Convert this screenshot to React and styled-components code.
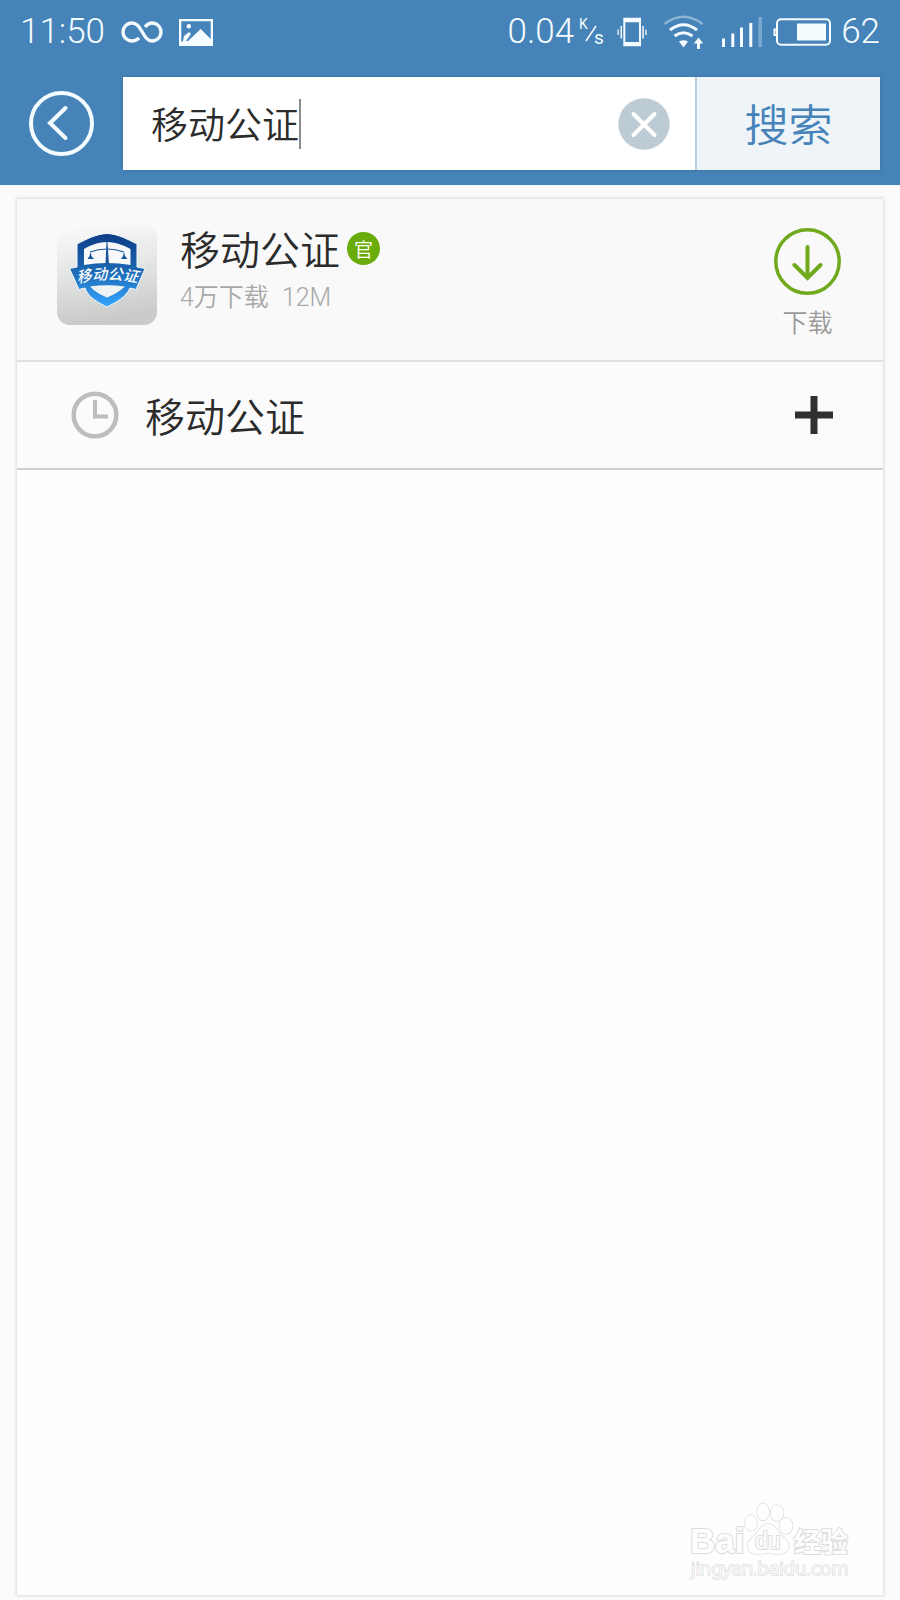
import React, { useState } from "react";
import styled, { createGlobalStyle } from "styled-components";

const cjk = '"Noto Sans CJK SC", sans-serif';

const GlobalStyle = createGlobalStyle`
  *, *::before, *::after { box-sizing: border-box; }
  body {
    margin: 0;
    background: #fbfbfa;
    font-family: Roboto, ${cjk};
    font-weight: 300;
    color: #2b2b2b;
  }
  button, input { font: inherit; color: inherit; border: 0; padding: 0; margin: 0; background: none; }
  button { cursor: pointer; }
  svg { display: block; flex: none; }
`;

const Screen = styled.div`
  display: flex;
  flex-direction: column;
  min-height: 100vh;
`;

const Header = styled.header`
  background: #4683b8;
  color: #f4fcff;
  padding: 0 20px 15px;
`;

const StatusBar = styled.div`
  display: flex;
  align-items: center;
  justify-content: space-between;
  height: 64px;
  margin-bottom: 13px;
  font-size: 35px;
  line-height: 40px;
`;

const StatusGroup = styled.div`
  display: flex;
  align-items: center;
  gap: ${(p) => p.$gap}px;
`;

const Speed = styled.div`
  display: flex;
  align-items: center;
  gap: 5px;
`;

const SearchRow = styled.form`
  display: flex;
  align-items: center;
  gap: 29px;
  padding-left: 9px;
`;

const BackButton = styled.button`
  width: 65px;
  height: 65px;
`;

const SearchBox = styled.div`
  flex: 1;
  display: flex;
  height: 93px;
  background: #fff;
  box-shadow: 0 0 4px #3b719f;
`;

const Field = styled.label`
  flex: 1;
  display: flex;
  align-items: center;
  min-width: 0;
  padding: 0 25px 0 28px;
  color: #2b2b2b;
`;

const SearchInput = styled.input`
  field-sizing: content;
  min-width: 0;
  height: 60px;
  padding-bottom: 2px;
  font-family: ${cjk};
  font-size: 37px;
  font-weight: 350;
  outline: 0;
  caret-color: transparent;
`;

const Caret = styled.span`
  width: 2px;
  height: 50px;
  margin-right: auto;
  background: #8c8c8c;
`;

const ClearButton = styled.button`
  width: 52px;
  height: 52px;
  flex: none;
`;

const SearchButton = styled.button`
  width: 185px;
  padding-bottom: 2px;
  border-left: 2px solid #b9cfdc;
  background: #eff4f8;
  color: #4683b8;
  font-family: ${cjk};
  font-size: 44px;
  font-weight: 350;
  line-height: 60px;
`;

const Card = styled.main`
  position: relative;
  flex: 1;
  margin: 14px 17px 5px;
  background: #fefefe;
  box-shadow: 0 0 3px 1px #d9d9d4;
`;

const AppRow = styled.section`
  display: flex;
  height: 163px;
  padding: 26px 42px 0 40px;
  background: #f9f9f9;
  border-bottom: 2px solid #e0e0e0;
`;

const AppInfo = styled.div`
  flex: 1;
  padding-left: 23px;
`;

const AppTitle = styled.h1`
  display: flex;
  align-items: center;
  gap: 7px;
  height: 46px;
  margin: 0;
  font-family: ${cjk};
  font-size: 40px;
  font-weight: 350;
  line-height: 46px;
`;

const Official = styled.span`
  width: 33px;
  height: 33px;
  border-radius: 50%;
  background: #69ac09;
  color: #fff;
  font-size: 19px;
  line-height: 33px;
  text-align: center;
`;

const Meta = styled.p`
  display: flex;
  gap: 13px;
  margin: 9px 0 0;
  color: #a8a8a8;
  font-size: 25px;
  font-weight: 350;
  line-height: 36px;
`;

const DownloadButton = styled.button`
  display: flex;
  flex-direction: column;
  align-items: center;
  align-self: flex-start;
  gap: 8px;
  margin-top: 3px;
  color: #999;
  font-family: ${cjk};
  font-size: 25px;
  font-weight: 350;
  line-height: 36px;
`;

const HistoryRow = styled.section`
  display: flex;
  align-items: center;
  height: 108px;
  padding: 0 50px 0 54px;
  background: #fbfbfb;
  border-bottom: 2px solid #d0d0d0;
`;

const HistoryLink = styled.a`
  flex: 1;
  display: flex;
  align-items: center;
  gap: 26px;
  color: inherit;
  font-family: ${cjk};
  font-size: 40px;
  font-weight: 350;
  line-height: 48px;
  text-decoration: none;
`;

const PlusButton = styled.button`
  width: 38px;
  height: 38px;
`;

const Watermark = styled.div`
  position: absolute;
  right: 28px;
  bottom: 10px;
`;

const InfinityIcon = () => (
  <svg width="42" height="24" viewBox="0 0 42 24" fill="none" stroke="currentColor" strokeWidth="3.300">
    <path d="M18 18C16 20 13.500 21 11 21A9 9 0 0 1 11 3C16 3 18 7 21 11.500C24 16.500 26 21 31 21A9 9 0 0 0 31 3C28.500 3 26 4.500 24 7" />
  </svg>
);

const PictureIcon = () => (
  <svg width="34" height="27" viewBox="0 0 34 27" fill="currentColor">
    <path d="M0 0H34V27H0ZM2.300 2.300V23L4 22L5 17L10 13L12 15L7 22L9 22L21.700 10L31.700 20V2.300Z" fillRule="evenodd" />
    <circle cx="9.800" cy="7.300" r="2.200" />
  </svg>
);

const SpeedUnit = () => (
  <svg width="28" height="34" viewBox="0 0 28 34" fill="currentColor" fontFamily="Roboto, sans-serif" fontWeight="400">
    <text x="0" y="14" fontSize="14">K</text>
    <path d="M7 26L17 11" stroke="currentColor" strokeWidth="1.500" />
    <text x="15" y="29" fontSize="19">s</text>
  </svg>
);

const VibrateIcon = () => (
  <svg width="36" height="30" viewBox="0 0 36 30" fill="currentColor">
    <path d="M6.300 .7H24V29.300H6.300ZM8.300 5.300V25H22V5.300Z" fillRule="evenodd" />
    <path d="M.5 12.500H1.800V18H.5ZM3.500 9H5V21.500H3.500ZM25.300 9H26.800V21.500H25.300ZM28.300 12.500H29.600V18H28.300Z" />
  </svg>
);

const WifiIcon = () => (
  <svg width="48" height="34" viewBox="0 0 48 34" fill="none" stroke="currentColor">
    <path d="M1.500 9Q20.500 -5.500 39.500 9" strokeWidth="2.500" opacity=".4" />
    <path d="M7 15Q20.500 4.500 34 15" strokeWidth="3" />
    <path d="M11.500 21Q20.500 14.500 29.500 21" strokeWidth="3" />
    <path d="M16 26.500Q20.500 24 25 26.500L20.500 32.500Z" fill="currentColor" stroke="none" />
    <path d="M35.500 22.500L40.200 28.500H37V34H34V28.500H30.800Z" fill="currentColor" stroke="none" />
  </svg>
);

const SignalIcon = () => (
  <svg width="42" height="32" viewBox="0 0 42 32" fill="currentColor">
    <path d="M1 22.500H4V31H1ZM10.300 17.500H13.300V31H10.300ZM19 11.500H22V31H19ZM28.300 7H31.300V31H28.300Z" />
    <path d="M37.300 1H41V31H37.300Z" opacity=".3" />
  </svg>
);

const BatteryIcon = () => (
  <svg width="58" height="30" viewBox="0 0 58 30" fill="none" stroke="currentColor" strokeWidth="2">
    <rect x="4" y="2.300" width="53" height="25.500" rx="4" />
    <path d="M3 12.500H1.500V18H3" />
    <rect x="24" y="6.500" width="29" height="17" fill="currentColor" stroke="none" />
  </svg>
);

const BackIcon = () => (
  <svg width="65" height="65" viewBox="0 0 65 65" fill="none" stroke="#f4fcff" strokeWidth="4">
    <circle cx="32.500" cy="32.500" r="30.500" />
    <path d="M36.500 17L21 32L36.500 47" strokeLinecap="round" />
  </svg>
);

const ClearIcon = () => (
  <svg width="52" height="52" viewBox="0 0 52 52">
    <circle cx="26" cy="26" r="25.700" fill="#bccbd4" />
    <path d="M15.500 16L36.500 37M36.500 16L15.500 37" stroke="#fff" strokeWidth="4" strokeLinecap="round" />
  </svg>
);

const DownloadIcon = () => (
  <svg width="67" height="67" viewBox="0 0 67 67" fill="none" stroke="#70a91c">
    <circle cx="33.500" cy="33.500" r="31.700" strokeWidth="3.500" />
    <path d="M33.500 19V50M20.500 37L33.500 50L46.500 37" strokeWidth="4" strokeLinecap="round" />
  </svg>
);

const ClockIcon = () => (
  <svg width="48" height="48" viewBox="0 0 48 48" fill="none" stroke="#bdbdbd" strokeWidth="4">
    <circle cx="24" cy="24" r="21.300" strokeWidth="4.500" />
    <path d="M24 9V25.500H37" />
  </svg>
);

const PlusIcon = () => (
  <svg width="38" height="38" viewBox="0 0 38 38">
    <path d="M19 0V38M0 19H38" stroke="#303030" strokeWidth="7" />
  </svg>
);

const AppLogo = () => (
  <svg width="100" height="100" viewBox="0 0 100 100" role="img" aria-label="移动公证">
    <defs>
      <linearGradient id="tile" x1="0" y1="0" x2=".15" y2="1">
        <stop offset="0" stopColor="#fafbfa" />
        <stop offset=".5" stopColor="#e4e5e5" />
        <stop offset="1" stopColor="#c9caca" />
      </linearGradient>
      <linearGradient id="shield" x1="0" y1="0" x2="0" y2="1">
        <stop offset="0" stopColor="#0d3c86" />
        <stop offset=".5" stopColor="#1c68b3" />
        <stop offset="1" stopColor="#35a7ff" />
      </linearGradient>
      <path id="nameArc" d="M18 59Q50 50 86 59" />
    </defs>
    <rect width="100" height="100" rx="13" fill="url(#tile)" />
    <path
      d="M50 8.500C39 9 30 14 20 19V42L12.500 43.500L22 64.500L28 63C31 72 40 77 50 82C60 77 69 72 73 63L79 64.500L88 43.500L80 42V19C70 14 61 9 50 8.500Z"
      fill="url(#shield)"
      stroke="#f4f8fb"
      strokeWidth="1"
    />
    <path d="M27 24C36 19 42 17.500 50 17C58 17.500 64 19 73.500 24V40Q50 36 27 40Z" fill="#f6f8f9" />
    <path d="M33 61.500Q50 59 68 61.500Q61 68 50 72.500Q39 68 33 61.500Z" fill="#f0f2f3" />
    <path d="M49.500 17H50.500L52 39H48.500Z" fill="#1a569c" />
    <path d="M33 27Q50 21 67 27" fill="none" stroke="#1a569c" strokeWidth="1.200" />
    <path d="M33.500 27L32.500 31L30.500 34H37L34.500 31ZM67 27L66 31L64 34H70.500L68 31Z" fill="#1a569c" />
    <text fontFamily='"Noto Sans CJK SC", sans-serif' fontWeight="500" fontStyle="italic" fontSize="15" fill="#fff">
      <textPath href="#nameArc" startOffset="3">移动公证</textPath>
    </text>
  </svg>
);

const BaiduLogo = () => (
  <svg
    width="166"
    height="90"
    viewBox="-2 0 166 90"
    fill="#fefefe"
    stroke="#dcdcdc"
    strokeWidth="1.500"
    style={{ paintOrder: "stroke" }}
    fontFamily='"Liberation Sans", sans-serif'
  >
    <text x="-1" y="58" fontSize="35" fontWeight="700" strokeWidth="2">Bai</text>
    <ellipse cx="60" cy="28" rx="6" ry="8" />
    <ellipse cx="72" cy="17" rx="6" ry="8.500" />
    <ellipse cx="86" cy="18" rx="6.500" ry="8" />
    <ellipse cx="95" cy="31" rx="6.500" ry="8" />
    <path d="M77 29C70 29 68 36 62 42C54 48 55 58 65 59C70 59.500 73 58 77 58C81 58 84 59.500 89 59C99 58 101 48 92 42C86 36 84 29 77 29Z" />
    <text x="64" y="54" fontSize="23" strokeWidth="2">du</text>
    <text x="103" y="57" fontSize="27" fontWeight="700" strokeWidth="2" fontFamily='"Noto Sans CJK SC", sans-serif'>经验</text>
    <text x="0" y="80" fontSize="19" strokeWidth="1.500" fontFamily='"Noto Sans", sans-serif'>jingyan.baidu.com</text>
  </svg>
);

export default function App() {
  const [query, setQuery] = useState("移动公证");

  return (
    <Screen>
      <GlobalStyle />
      <Header>
        <StatusBar>
          <StatusGroup $gap={16}>
            <span>11:50</span>
            <InfinityIcon />
            <PictureIcon />
          </StatusGroup>
          <StatusGroup $gap={10}>
            <Speed>
              <span>0.04</span>
              <SpeedUnit />
            </Speed>
            <VibrateIcon />
            <WifiIcon />
            <SignalIcon />
            <BatteryIcon />
            <span>62</span>
          </StatusGroup>
        </StatusBar>
        <SearchRow onSubmit={(e) => e.preventDefault()}>
          <BackButton type="button" aria-label="返回">
            <BackIcon />
          </BackButton>
          <SearchBox>
            <Field>
              <SearchInput
                type="text"
                aria-label="搜索"
                value={query}
                onChange={(e) => setQuery(e.target.value)}
              />
              <Caret />
              <ClearButton type="button" aria-label="清除" onClick={() => setQuery("")}>
                <ClearIcon />
              </ClearButton>
            </Field>
            <SearchButton type="submit">搜索</SearchButton>
          </SearchBox>
        </SearchRow>
      </Header>
      <Card>
        <AppRow>
          <AppLogo />
          <AppInfo>
            <AppTitle>
              移动公证
              <Official>官</Official>
            </AppTitle>
            <Meta>
              <span>4万下载</span>
              <span>12M</span>
            </Meta>
          </AppInfo>
          <DownloadButton type="button">
            <DownloadIcon />
            下载
          </DownloadButton>
        </AppRow>
        <HistoryRow>
          <HistoryLink href="#history">
            <ClockIcon />
            移动公证
          </HistoryLink>
          <PlusButton type="button" aria-label="添加">
            <PlusIcon />
          </PlusButton>
        </HistoryRow>
        <Watermark>
          <BaiduLogo />
        </Watermark>
      </Card>
    </Screen>
  );
}
